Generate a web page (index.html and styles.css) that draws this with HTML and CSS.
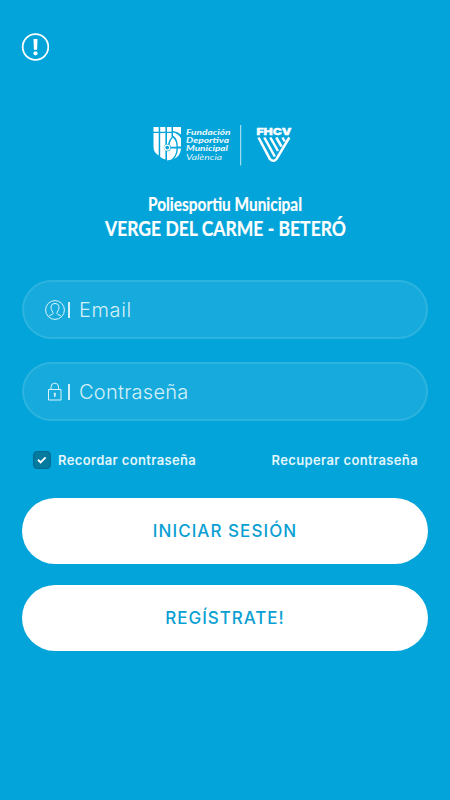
FILE: index.html
```html
<!DOCTYPE html>
<html lang="es">
  <head>
    <meta charset="UTF-8" />
    <meta name="viewport" content="width=device-width, initial-scale=1" />
    <title>Iniciar sesión</title>
    <link rel="stylesheet" href="styles.css">
  </head>
  <body>
    <header class="header">
      <svg class="info" viewBox="0 0 28 28">
        <circle cx="14.500" cy="14" r="12.800" fill="none" stroke="#fff" stroke-width="1.800" />
        <path d="M12.500 6h4l-.4 10.800h-3.200z" fill="#fff" />
        <circle cx="14.500" cy="20.300" r="2.100" fill="#fff" />
      </svg>
    </header>
    <div class="brand">
      <svg class="logos" viewBox="0 0 140 44">
        <!-- Fundación -->
        <g fill="#fff">
          <path d="M.5 4h5.200v4.700H.5zM7.200 4h5.200v4.700H7.200zM14 4h4.500v4.700H14zM20 4h8v7.500Q25 8.500 20 8z" />
          <path d="M.5 10h5.200v22.500Q.5 29.500.5 24zM7.200 10h5.200v11.600a3.600 3.600 0 0 0 0 6v8.900Q9.500 35.500 7.200 34z" />
          <path d="M14 10h4.500v4.500Q15.500 17 15 21h-1zM20 9.500Q25.500 10.500 28 15.500v8h-3.200Q25 16 20 12.500zM20 14.500Q23.500 18 23.500 23.800H18Q17.500 22 16.500 21.400 17 17 20 14.500z" />
          <path d="M18 25.500h5.500Q23.500 32 18.500 36.500L14 37.500v-9.300Q17 28.500 18 25.500zM25 25.500h3Q27.500 33 21 36 24.500 32 25 25.500z" />
        </g>
        <circle cx="14.200" cy="24.600" r="2.500" fill="#03a4d9" stroke="#fff" stroke-width="1.300" />
        <g class="fdm">
          <text x="33" y="12" textLength="44.500" lengthAdjust="spacingAndGlyphs">Fundación</text>
          <text x="33" y="20.200" textLength="43" lengthAdjust="spacingAndGlyphs">Deportiva</text>
          <text x="33" y="28.400" textLength="42" lengthAdjust="spacingAndGlyphs">Municipal</text>
          <text class="fdm-light" x="33" y="36.500" textLength="36" lengthAdjust="spacingAndGlyphs">València</text>
        </g>
        <path d="M87.700 2v40.500" stroke="#fff" stroke-opacity=".75" stroke-width="1" />
        <!-- FHCV -->
        <text class="fhcv" x="103.400" y="11.600" textLength="35.200" lengthAdjust="spacingAndGlyphs">FHCV</text>
        <g fill="none" stroke="#fff" stroke-width="2.500">
          <path d="M105.500 14.500L117 36.200Q120.500 39.500 123.500 36L136.300 14.500" />
          <path d="M111.300 14.500L121.800 33.500M117.300 14.500L125 28M123.300 14.500L128.500 23.500M129.500 14.500L131.800 18.500" />
        </g>
      </svg>
      <svg class="center-name" viewBox="0 0 250 60">
        <text class="center-type" x="48" y="21" textLength="154" lengthAdjust="spacingAndGlyphs">Poliesportiu Municipal</text>
        <text class="center-title" x="5" y="46" textLength="241" lengthAdjust="spacingAndGlyphs">VERGE DEL CARME - BETERÓ</text>
      </svg>
    </div>
    <form class="login">
      <label class="field">
        <svg class="field-icon" viewBox="0 0 20 20">
          <circle cx="10" cy="10" r="9.400" />
          <path d="M3.500 16.500Q4 15.300 7.200 14.500 8.700 13.800 7.800 12.200 5.800 9.500 6 6.800 6.300 3.400 10 3.400T14 6.800Q14.200 9.500 12.200 12.200 11.300 13.800 12.800 14.500 16 15.300 16.500 16.500" />
        </svg>
        <span class="bar"></span>
        <input class="email" type="email" placeholder="Email" />
      </label>
      <label class="field">
        <svg class="field-icon" viewBox="0 0 20 20">
          <path d="M3.500 7.500h12.500v10.500H3.500zM6 7.500V5a3.800 3.800 0 0 1 7.600 0v2.500" />
          <path d="M9.800 11.500v3.500" stroke-width="1.500" />
          <circle cx="9.800" cy="11.800" r=".8" />
        </svg>
        <span class="bar"></span>
        <input class="password" type="password" placeholder="Contraseña" />
      </label>
      <div class="options">
        <span class="check">
          <svg viewBox="0 0 16 16"><path d="M4 7.800l2.600 2.600 5-5" /></svg>
        </span>
        <span class="remember">Recordar contraseña</span>
        <a class="recover">Recuperar contraseña</a>
      </div>
      <button class="btn" type="button">INICIAR SESIÓN</button>
      <button class="btn register" type="button">REGÍSTRATE!</button>
    </form>
  </body>
</html>
```
FILE: styles.css
```css
* {
  box-sizing: border-box;
}
body {
  margin: 0;
  height: 800px;
  padding: 33px 22px 0;
  background-color: #03a4d9;
  font-family: Inter, "Liberation Sans", sans-serif;
  color: #fff;
  overflow: hidden;
}
.header {
  height: 90px;
}
.info {
  display: block;
  width: 28px;
  height: 28px;
  margin-left: -1px;
}
.brand {
  height: 157px;
}
.logos {
  display: block;
  width: 140px;
  height: 44px;
  margin-left: 131px;
}
.fdm {
  font-family: Lato, sans-serif;
  font-size: 7.6px;
  font-weight: 900;
  font-style: italic;
  fill: #fff;
  fill-opacity: 0.9;
}
.fdm-light {
  font-weight: 400;
}
.fhcv {
  font-size: 9.6px;
  font-weight: 900;
  fill: #fff;
  stroke: #fff;
  stroke-width: 0.3px;
}
.center-name {
  display: block;
  width: 250px;
  height: 60px;
  margin: 23px 0 0 78px;
}
.center-type,
.center-title {
  font-family: Lato, sans-serif;
  font-weight: 700;
  fill: #fff;
  stroke: #fff;
  stroke-width: 0.2px;
}
.center-type {
  font-size: 18px;
}
.center-title {
  font-size: 21.5px;
}
.login {
  display: flex;
  flex-direction: column;
}
/* Campos */
.field {
  display: flex;
  align-items: center;
  height: 59px;
  margin-bottom: 23px;
  padding-left: 21px;
  border: 2px solid rgba(255, 255, 255, 0.1);
  border-radius: 30px;
  background-color: rgba(255, 255, 255, 0.08);
}
.field-icon {
  width: 20px;
  height: 20px;
  fill: none;
  stroke: #d8f3fb;
  stroke-width: 1;
}
.bar {
  width: 2px;
  height: 16px;
  margin-left: 3px;
  background-color: #d3eff8;
}
.field input {
  width: 300px;
  margin-left: 9px;
  padding: 0;
  border: 0;
  background: none;
  font-family: inherit;
  font-size: 20px;
  font-weight: 350;
}
.field .email {
  letter-spacing: 0.6px;
}
.field .password {
  letter-spacing: 0.25px;
}
.field input::placeholder {
  color: #d3eff8;
  opacity: 1;
}
.options {
  display: flex;
  align-items: center;
  height: 18px;
  margin-top: 7px;
  padding: 0 10px 0 11px;
  font-size: 13px;
  font-weight: 600;
  letter-spacing: 0.37px;
  color: #e2f6fc;
}
.check {
  width: 18px;
  height: 18px;
  border: 1px solid #046b91;
  border-radius: 4px;
  background-color: #047a9f;
}
.check svg {
  display: block;
  width: 16px;
  height: 16px;
  fill: none;
  stroke: #fff;
  stroke-width: 2;
}
.remember {
  margin-left: 7px;
}
.recover {
  margin-left: auto;
}
.btn {
  height: 66px;
  margin-top: 29px;
  border: 0;
  border-radius: 33px;
  background-color: #fff;
  color: #0a9fd3;
  font-family: inherit;
  font-size: 17px;
  font-weight: 500;
  letter-spacing: 1.05px;
}
.register {
  margin-top: 21px;
  letter-spacing: 0.95px;
}
```
